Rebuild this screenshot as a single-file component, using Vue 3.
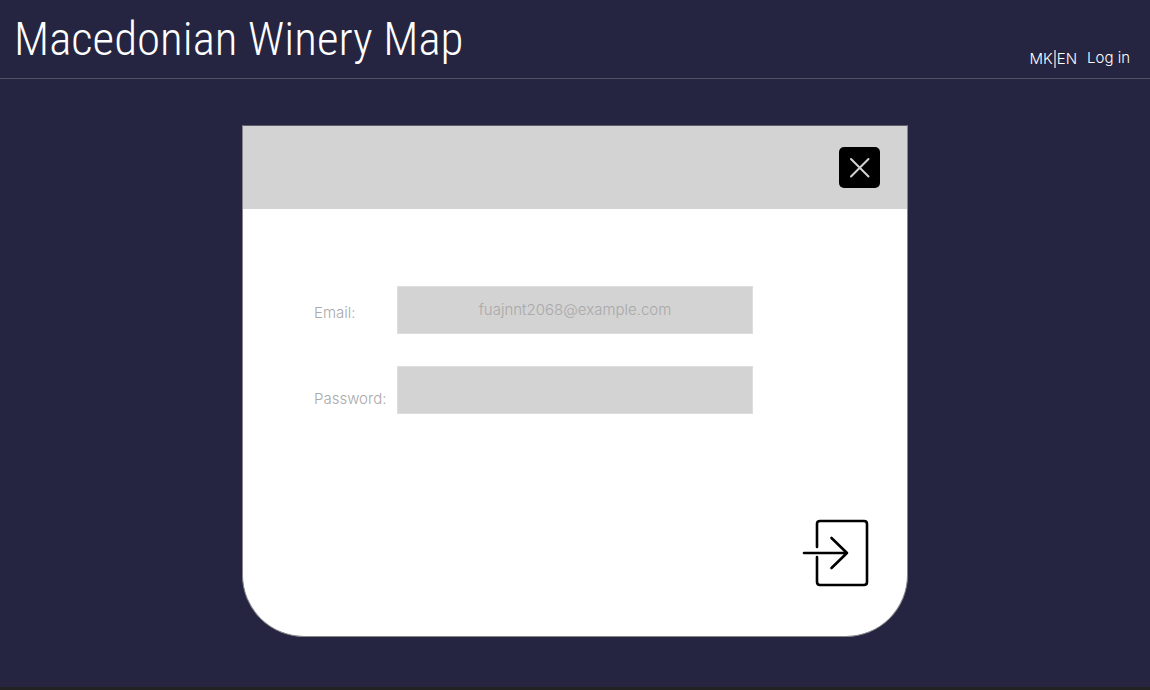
<script setup>
import { ref } from 'vue'

const email = ref('')
const password = ref('')
</script>

<template>
  <div class="page">
    <header class="topbar">
      <h1 class="brand">Macedonian Winery Map</h1>
      <nav class="links">
        <div class="languages">
          <a href="#mk">MK</a><span class="divider"></span><a href="#en">EN</a>
        </div>
        <a class="login-link" href="#login">Log in</a>
      </nav>
    </header>

    <main class="content">
      <form class="card" @submit.prevent>
        <div class="card-head">
          <button class="close" type="button" aria-label="Close">
            <svg viewBox="0 0 41 41" aria-hidden="true">
              <path d="M12 12 29.500 29.500M29.500 12 12 29.500" />
            </svg>
          </button>
        </div>
        <div class="fields">
          <label class="email-label" for="email">Email:</label>
          <input id="email" v-model="email" type="email" placeholder="fuajnnt2068@example.com" />
          <label class="password-label" for="password">Password:</label>
          <input id="password" v-model="password" type="password" />
        </div>
        <div class="actions">
          <button class="submit" type="submit" aria-label="Log in">
            <svg viewBox="0 0 68 68" aria-hidden="true">
              <path d="M15 28V5Q15 2 18 2H62Q65 2 65 5V63Q65 66 62 66H18Q15 66 15 63V38" />
              <path d="M2 34H45M29.500 19 45 34 29.500 49" />
            </svg>
          </button>
        </div>
      </form>
    </main>
    <footer class="base"></footer>
  </div>
</template>

<style>
body {
  background: #262541;
}
</style>

<style scoped>
.page {
  box-sizing: border-box;
  min-height: 100vh;
  display: flex;
  flex-direction: column;
  background: #262541;
  font-family: Inter, "Liberation Sans", sans-serif;
  font-size: 15px;
  font-weight: 350;
  line-height: 20px;
}

.topbar {
  display: flex;
  justify-content: space-between;
  align-items: flex-end;
  padding: 9px 20px 9px 14px;
  border-bottom: 1px solid #535166;
  color: #fff;
}

.brand {
  margin: 0;
  font-family: "Roboto Condensed", "Liberation Sans Narrow", Roboto, sans-serif;
  font-size: 47px;
  font-weight: 300;
  line-height: 60px;
}

.links {
  display: flex;
  align-items: flex-start;
  gap: 10px;
}

.links a {
  color: inherit;
  text-decoration: none;
}

.languages {
  display: flex;
  align-items: center;
  padding-top: 1px;
}

.divider {
  width: 2px;
  height: 18px;
  margin: 0 1px;
  background: #a0a0ae;
}

.content {
  flex: 1;
  display: flex;
  justify-content: center;
  padding: 46px 20px 50px;
}

.card {
  box-sizing: border-box;
  display: flex;
  flex-direction: column;
  width: 60%;
  min-width: 540px;
  max-width: 666px;
  border: 1px solid #85858a;
  border-top-color: #5f5d6c;
  border-radius: 0 0 62px 62px;
  background: #fff;
}

.card-head {
  display: flex;
  justify-content: flex-end;
  padding: 21px 27px;
  background: #d3d3d3;
}

button {
  padding: 0;
  border: 0;
  background: none;
  cursor: pointer;
}

.close {
  width: 41px;
  height: 41px;
  border-radius: 5px;
  background: #000;
}

svg {
  display: block;
  width: 100%;
  height: 100%;
  fill: none;
  stroke-linecap: round;
  stroke-linejoin: round;
}

.close svg {
  stroke: #d3d3d3;
  stroke-width: 2;
}

.fields {
  display: grid;
  grid-template-columns: 83px minmax(0, 356px);
  row-gap: 32px;
  padding: 77px 71px 0;
}

label {
  color: #a9a9a9;
}

.email-label {
  padding-top: 17px;
}

.password-label {
  padding-top: 23px;
}

input {
  box-sizing: border-box;
  width: 100%;
  height: 48px;
  padding: 0 16px 2px;
  border: 1px solid #dedede;
  border-radius: 0;
  background: #d3d3d3;
  color: #555;
  font: inherit;
  text-align: center;
}

input::placeholder {
  color: #a9a9a9;
  opacity: 1;
}

.actions {
  display: flex;
  justify-content: flex-end;
  margin-top: auto;
  padding: 0 37px 49px;
}

.submit {
  width: 68px;
  height: 68px;
}

.submit svg {
  stroke: #000;
  stroke-width: 2.6;
}

.base {
  height: 3px;
  background: #222;
}
</style>
